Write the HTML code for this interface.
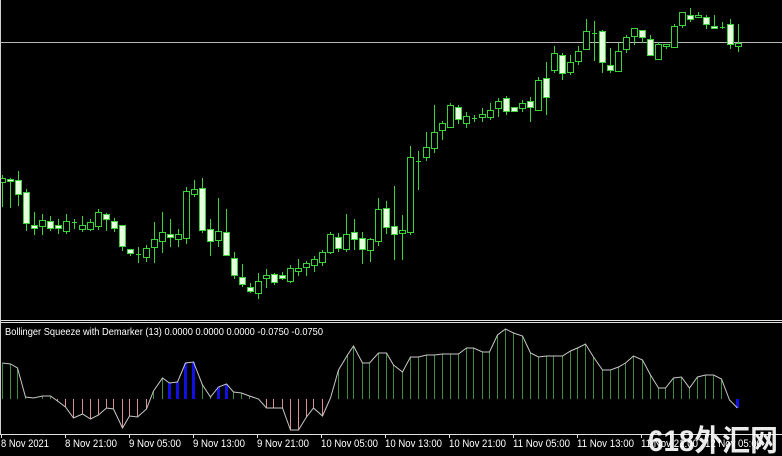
<!DOCTYPE html>
<html><head><meta charset="utf-8"><style>
html,body{margin:0;padding:0;background:#000;width:782px;height:456px;overflow:hidden}
svg{display:block}
text{font-family:"Liberation Sans","DejaVu Sans",sans-serif}
</style></head><body>
<svg id="s" width="782" height="456" xmlns="http://www.w3.org/2000/svg">
<rect width="782" height="456" fill="#000"/>
<line x1="0" y1="42.5" x2="782" y2="42.5" stroke="#b8b8b8" stroke-width="1"/>
<g id="c"></g>
<g id="h"></g>
<line x1="0" y1="320.5" x2="782" y2="320.5" stroke="#e0e0e0"/>
<line x1="0" y1="322.5" x2="782" y2="322.5" stroke="#e0e0e0"/>
<line x1="0.5" y1="0" x2="0.5" y2="434" stroke="#d0d0d0"/>
<line x1="0" y1="434.5" x2="782" y2="434.5" stroke="#e0e0e0"/>
<text x="5" y="335" font-size="10.5" fill="#fff" textLength="318" lengthAdjust="spacingAndGlyphs">Bollinger Squeeze with Demarker (13) 0.0000 0.0000 0.0000 -0.0750 -0.0750</text>
<g id="ax" font-size="11" fill="#fff"></g>
<text x="648" y="451" font-size="30" font-weight="bold" fill="#fff" textLength="130" lengthAdjust="spacingAndGlyphs" style="font-family:'Liberation Sans','Noto Sans CJK SC',sans-serif" opacity="0.92">618外汇网</text>
</svg>
<script>
var C=[[182,178,175,207],[179,181,178,208],[180,194,171,206],[192,223,189,231],[225,228,212,235],[226,220,214,235],[221,228,216,231],[225,228,219,234],[231,221,214,234],[222,222,219,229],[229,225,216,232],[229,222,219,231],[226,212,209,230],[214,219,213,231],[221,228,218,232],[225,246,225,251],[249,253,249,256],[254,254,247,263],[257,248,245,262],[247,239,222,263],[241,232,212,253],[234,237,219,247],[239,234,229,247],[238,191,187,244],[194,189,180,197],[188,230,178,233],[229,241,219,256],[240,231,198,247],[232,255,209,256],[258,275,252,279],[277,284,264,287],[287,291,283,293],[293,281,273,299],[278,275,269,288],[274,282,273,285],[275,278,272,280],[281,268,265,283],[271,268,259,276],[267,263,261,276],[265,259,256,272],[262,252,250,266],[252,234,232,254],[237,248,233,252],[249,234,214,252],[232,239,219,250],[238,249,232,264],[250,239,238,262],[241,209,198,246],[208,227,201,234],[226,234,186,260],[233,230,215,260],[232,157,146,235],[161,161,151,190],[157,147,132,161],[148,132,105,153],[130,123,121,140],[127,105,103,128],[107,119,105,124],[123,116,112,128],[118,118,115,122],[117,114,108,122],[117,110,103,120],[108,101,98,117],[98,111,96,115],[107,111,107,111],[108,103,100,112],[101,107,97,122],[110,80,77,111],[78,97,62,115],[70,53,46,73],[55,73,53,80],[72,62,55,75],[61,51,46,65],[49,31,19,50],[33,33,21,61],[31,62,30,73],[65,70,48,73],[71,51,43,72],[49,37,35,53],[36,28,28,45],[30,37,30,43],[39,55,35,56],[59,44,42,60],[46,44,44,49],[47,26,24,47],[25,12,12,28],[15,19,8,22],[17,15,12,17],[17,24,15,29],[26,28,15,29],[27,27,22,29],[24,44,19,49],[46,43,24,52]];
var g=document.getElementById('c'),o='';
C.forEach(function(d,i){var x=2+8*i,t=Math.min(d[0],d[1]),b=Math.max(d[0],d[1]);
o+='<line x1="'+(x+.5)+'" y1="'+d[2]+'" x2="'+(x+.5)+'" y2="'+d[3]+'" stroke="#3cd23c"/>';
if(b-t<1){o+='<line x1="'+(x-2)+'" y1="'+(t+.5)+'" x2="'+(x+3)+'" y2="'+(t+.5)+'" stroke="#3cd23c"/>';}
else{var bear=d[1]>d[0];o+='<rect x="'+(x-2.5)+'" y="'+(t+.5)+'" width="6" height="'+(b-t)+'" fill="'+(bear?'#e8ffe0':'#000')+'" stroke="#3cd23c"/>';}
});
g.innerHTML=o;
var P=[[2,363],[10,364],[17,368],[25,397],[33,398],[42,396],[50,396],[57,401],[65,407],[73,418],[82,414],[90,419],[98,415],[106,408],[113,409],[122,428],[129,416],[137,417],[146,409],[153,391],[162,378],[169,383],[177,382],[185,363],[193,362],[202,385],[210,397],[218,387],[226,384],[233,392],[241,393],[249,396],[258,399],[266,408],[273,408],[282,408],[290,430],[298,430],[306,417],[313,408],[322,416],[330,398],[338,370],[347,355],[353,346],[362,363],[369,363],[378,353],[386,353],[393,365],[402,372],[410,357],[418,357],[426,355],[434,355],[442,354],[450,354],[458,354],[466,348],[473,348],[482,352],[489,352],[497,335],[505,329],[513,333],[522,336],[530,353],[538,357],[546,356],[553,356],[562,356],[570,351],[577,348],[585,344],[593,357],[602,370],[610,370],[618,367],[625,363],[633,356],[642,360],[650,375],[658,388],[665,388],[673,378],[681,377],[689,388],[697,377],[705,375],[713,375],[721,379],[729,400],[737,408]];
var blue=[169,177,185,193,218,226,737],Z=399,h='',pts='';
P.forEach(function(p){var x=p[0]+.5,y=p[1];pts+=x+','+y+' ';
if(blue.indexOf(p[0])>=0){h+='<rect x="'+(p[0]-1)+'" y="'+Math.min(y,Z)+'" width="3" height="'+Math.abs(y-Z)+'" fill="#1010e0"/>';}
else if(y<Z-1){h+='<line x1="'+x+'" y1="'+Z+'" x2="'+x+'" y2="'+y+'" stroke="#3f8a3f"/>';}
else if(y>Z+1){h+='<line x1="'+x+'" y1="'+Z+'" x2="'+x+'" y2="'+y+'" stroke="#d89090"/>';}
});
h+='<polyline points="'+pts+'" fill="none" stroke="#c8c8c8" stroke-width="1"/>';
document.getElementById('h').innerHTML=h;
var L=[[0,'8 Nov 2021',48],[64,'8 Nov 21:00',52],[128,'9 Nov 05:00',52],[192,'9 Nov 13:00',52],[256,'9 Nov 21:00',52],[320,'10 Nov 05:00',57],[384,'10 Nov 13:00',57],[448,'10 Nov 21:00',57],[512,'11 Nov 05:00',57],[576,'11 Nov 13:00',57],[640,'11 Nov 21:00',57],[704,'12 Nov 05:00',57]],a='';
L.forEach(function(l){a+='<line x1="'+(l[0]+1.5)+'" y1="434" x2="'+(l[0]+1.5)+'" y2="438" stroke="#e0e0e0"/><text x="'+(l[0]+1)+'" y="447" textLength="'+l[2]+'" lengthAdjust="spacingAndGlyphs">'+l[1]+'</text>';});
document.getElementById('ax').innerHTML=a;
</script>
</body></html>
